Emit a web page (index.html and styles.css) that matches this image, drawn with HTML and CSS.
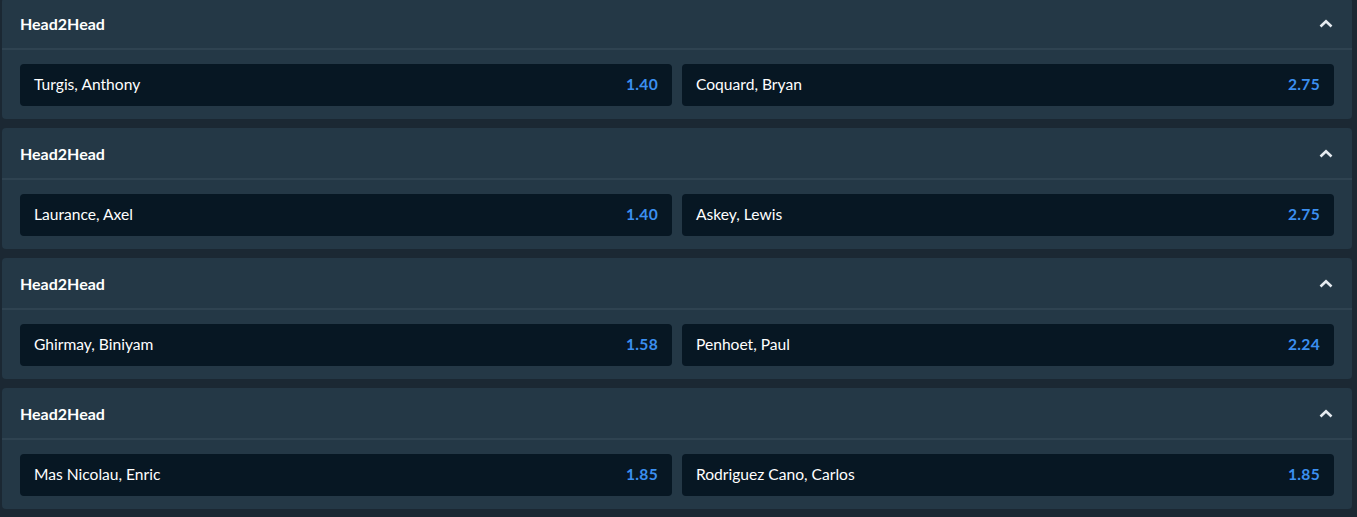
FILE: index.html
```html
<!DOCTYPE html>
<html lang="en">
<head>
  <meta charset="UTF-8" />
  <title>Head2Head</title>
  <link rel="stylesheet" href="styles.css">
</head>
<body>
  <div class="markets">
    <section class="market">
      <div class="market-head">
        <span class="market-title">Head2Head</span>
        <svg class="chevron" width="14" height="9" viewBox="0 0 14 9"><path d="M1.5 7.5 L7 2.2 L12.5 7.5" fill="none" stroke="#e6ebf0" stroke-width="2.6"/></svg>
      </div>
      <div class="market-body">
        <div class="pick"><span class="pick-name">Turgis, Anthony</span><span class="pick-odds">1.40</span></div>
        <div class="pick"><span class="pick-name">Coquard, Bryan</span><span class="pick-odds">2.75</span></div>
      </div>
    </section>
    <section class="market">
      <div class="market-head">
        <span class="market-title">Head2Head</span>
        <svg class="chevron" width="14" height="9" viewBox="0 0 14 9"><path d="M1.5 7.5 L7 2.2 L12.5 7.5" fill="none" stroke="#e6ebf0" stroke-width="2.6"/></svg>
      </div>
      <div class="market-body">
        <div class="pick"><span class="pick-name">Laurance, Axel</span><span class="pick-odds">1.40</span></div>
        <div class="pick"><span class="pick-name">Askey, Lewis</span><span class="pick-odds">2.75</span></div>
      </div>
    </section>
    <section class="market">
      <div class="market-head">
        <span class="market-title">Head2Head</span>
        <svg class="chevron" width="14" height="9" viewBox="0 0 14 9"><path d="M1.5 7.5 L7 2.2 L12.5 7.5" fill="none" stroke="#e6ebf0" stroke-width="2.6"/></svg>
      </div>
      <div class="market-body">
        <div class="pick"><span class="pick-name">Ghirmay, Biniyam</span><span class="pick-odds">1.58</span></div>
        <div class="pick"><span class="pick-name">Penhoet, Paul</span><span class="pick-odds">2.24</span></div>
      </div>
    </section>
    <section class="market">
      <div class="market-head">
        <span class="market-title">Head2Head</span>
        <svg class="chevron" width="14" height="9" viewBox="0 0 14 9"><path d="M1.5 7.5 L7 2.2 L12.5 7.5" fill="none" stroke="#e6ebf0" stroke-width="2.6"/></svg>
      </div>
      <div class="market-body">
        <div class="pick"><span class="pick-name">Mas Nicolau, Enric</span><span class="pick-odds">1.85</span></div>
        <div class="pick"><span class="pick-name">Rodriguez Cano, Carlos</span><span class="pick-odds">1.85</span></div>
      </div>
    </section>
  </div>
</body>
</html>
```

FILE: styles.css
```css
:root {
  --page-bg: #1b2833;
  --panel-bg: #243846;
  --line: #2f4351;
  --card-bg: #071723;
  --text: #ffffff;
  --odds: #3b8ff0;
  --font: 'Lato', 'Open Sans', sans-serif;
}
* {
  box-sizing: border-box;
}
body {
  margin: 0;
  background: var(--page-bg);
  font-family: var(--font);
  color: var(--text);
}
.markets {
  width: 1350px;
  margin: -2px 0 0 2px;
  display: flex;
  flex-direction: column;
  gap: 9px;
}
.market {
  background: var(--panel-bg);
  border-radius: 4px;
}
.market-head {
  height: 52px;
  display: flex;
  align-items: center;
  justify-content: space-between;
  padding: 0 19px 0 18px;
  border-bottom: 2px solid var(--line);
}
.market-title {
  font-size: 16px;
  font-weight: 700;
}
.chevron {
  display: block;
}
.market-body {
  display: grid;
  grid-template-columns: 1fr 1fr;
  gap: 10px;
  padding: 14px 18px 13px;
}
.pick {
  height: 42px;
  background: var(--card-bg);
  border-radius: 4px;
  display: flex;
  align-items: center;
  justify-content: space-between;
  padding: 0 14px 1px;
  font-size: 15.6px;
  line-height: 1;
}
.pick-odds {
  color: var(--odds);
  font-weight: 700;
  letter-spacing: 0.3px;
}
```
